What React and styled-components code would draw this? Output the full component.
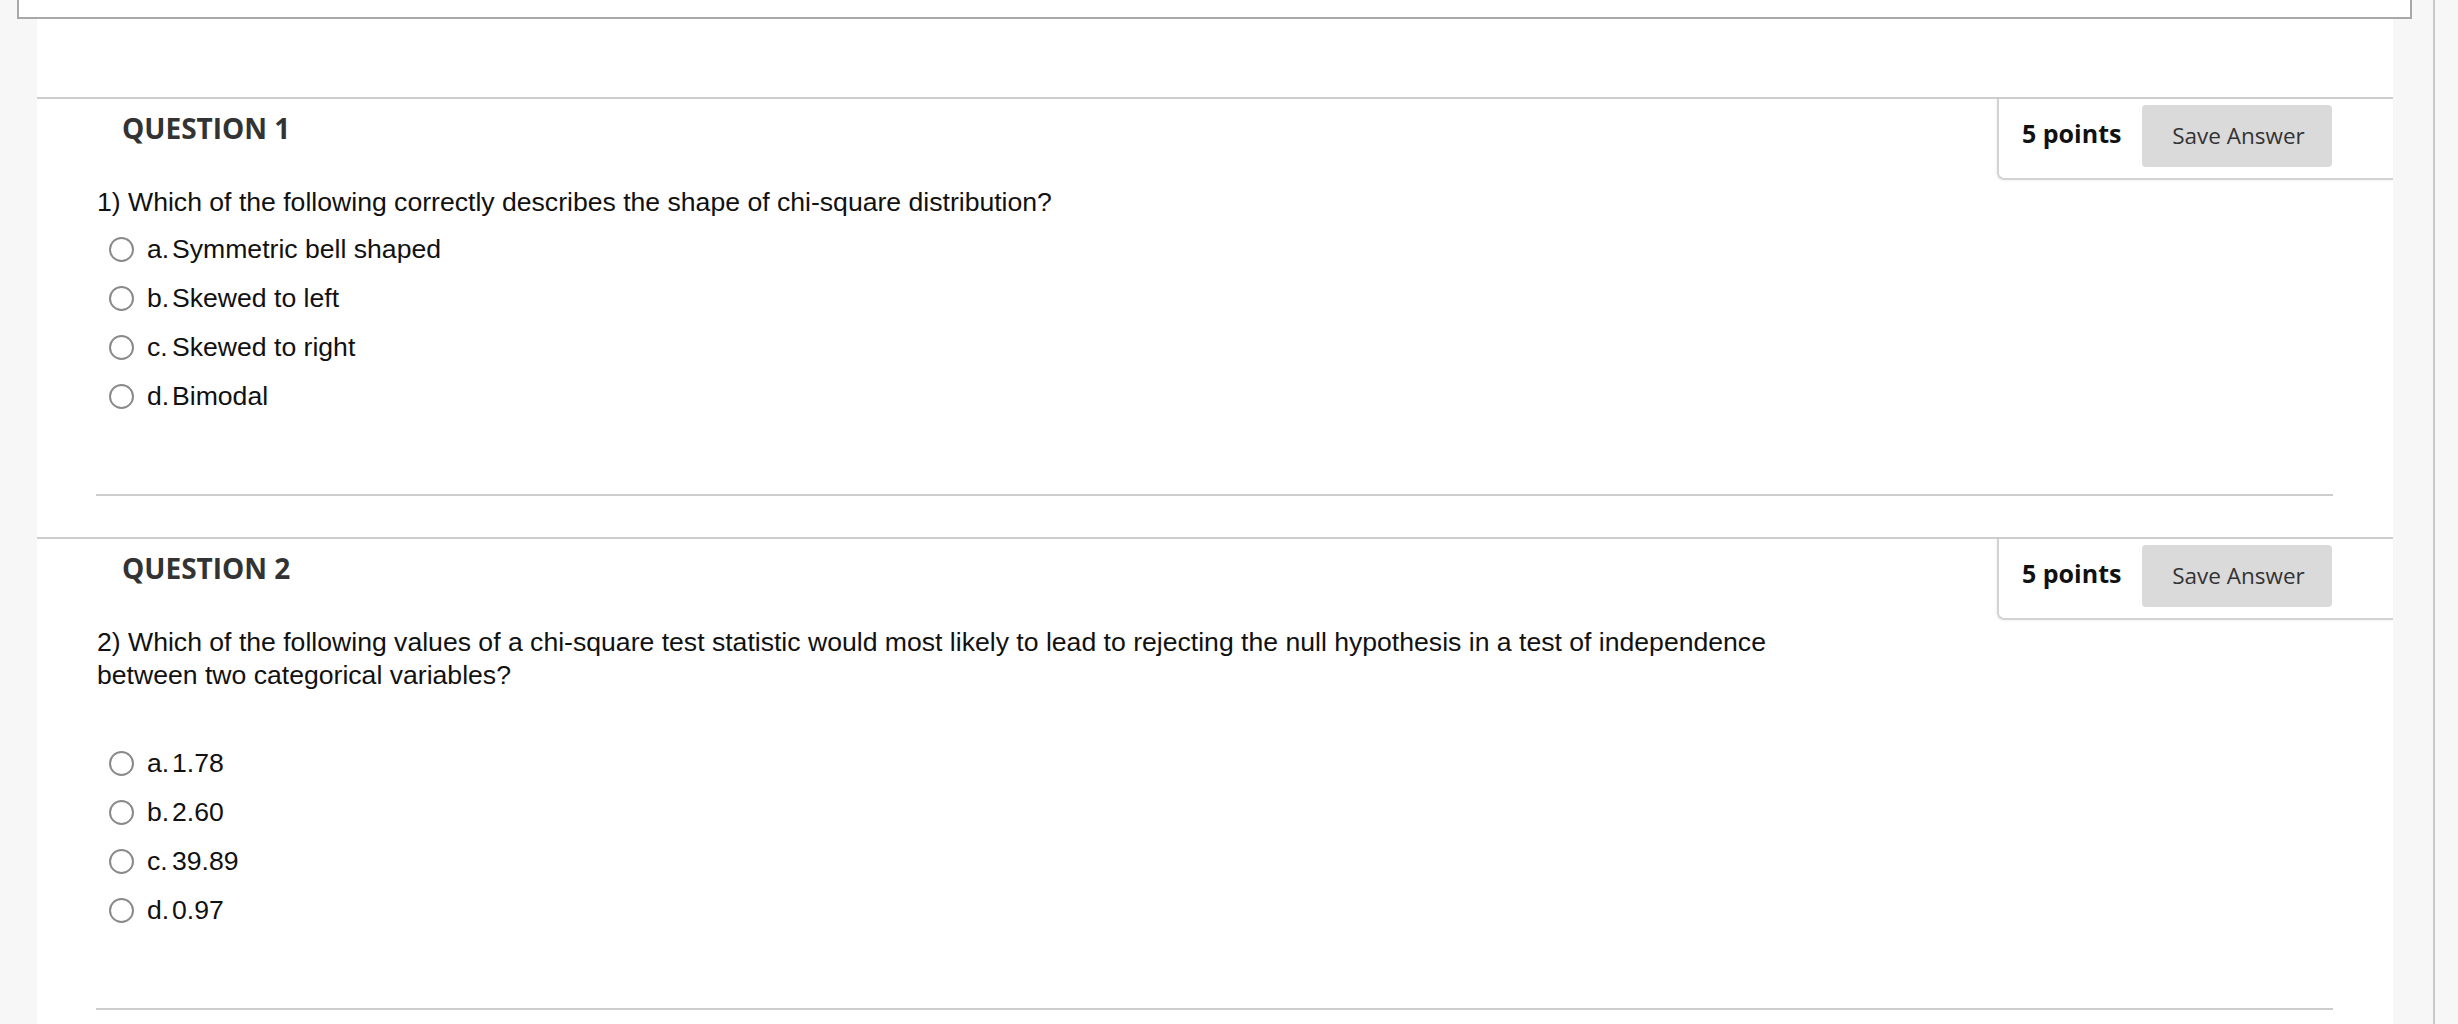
import React from "react";
import styled, { createGlobalStyle } from "styled-components";

const GlobalStyle = createGlobalStyle`
  html, body { margin: 0; padding: 0; background: #f7f7f7; }
  * { box-sizing: border-box; }
`;

const Page = styled.div`
  display: flex;
  min-height: 100vh;
  background: #f7f7f7;
`;

const Main = styled.div`
  width: 2433px;
  display: flex;
  flex-direction: column;
`;

const RightRail = styled.div`
  flex: 1;
  border-left: 2px solid #c8c8c8;
`;

const TopBox = styled.div`
  margin-left: 17px;
  width: 2395px;
  height: 19px;
  background: #fff;
  border: 2px solid #a8a8a8;
  border-top: none;
`;

const Panel = styled.div`
  margin-left: 37px;
  width: 2356px;
  background: #fff;
  padding-top: 78px;
  padding-bottom: 40px;
`;

const Question = styled.section`
  display: flex;
  flex-direction: column;
`;

const Header = styled.div`
  display: flex;
  justify-content: space-between;
  align-items: flex-start;
  border-top: 2px solid #cdcdcd;
`;

const Title = styled.h2`
  margin: 9px 0 0 85px;
  font-family: "Open Sans", sans-serif;
  font-weight: 700;
  font-size: 28px;
  line-height: 40px;
  color: #333;
`;

const PointsBox = styled.div`
  width: 396px;
  display: flex;
  align-items: center;
  gap: 21px;
  padding: 6px 60px 11px 23px;
  border-left: 2px solid #d3d3d3;
  border-bottom: 2px solid #d3d3d3;
  border-bottom-left-radius: 7px;
  box-shadow: -1px 1px 3px rgba(0, 0, 0, 0.05);
`;

const Points = styled.span`
  font-family: "Open Sans", sans-serif;
  font-weight: 700;
  font-size: 25px;
  color: #111;
  white-space: nowrap;
  margin-bottom: 6px;
`;

const SaveButton = styled.button`
  width: 190px;
  height: 62px;
  border: none;
  border-radius: 4px;
  background: #dadada;
  color: #333;
  font-family: "Open Sans", sans-serif;
  font-size: 22.5px;
  padding: 0 0 2px 2px;
  cursor: pointer;
`;

const Body = styled.div`
  margin: 6px 60px 0 60px;
  font-family: "Liberation Sans", Arial, sans-serif;
  color: #111;
`;

const QuestionText = styled.p`
  margin: 0;
  max-width: 1740px;
  font-size: 26.6px;
  line-height: 33px;
  padding-bottom: ${(p) => (p.$spaced ? "41px" : "0")};
`;

const Options = styled.ul`
  list-style: none;
  margin: 6px 0 0 0;
  padding: 0;
`;

const Option = styled.li`
  height: 49px;
  display: flex;
  align-items: center;
  padding-left: 12px;
  font-size: 26.6px;
`;

const Radio = styled.input.attrs({ type: "radio" })`
  appearance: none;
  -webkit-appearance: none;
  width: 25px;
  height: 25px;
  margin: 0 13px 0 0;
  border: 2px solid #8a8a8a;
  border-radius: 50%;
  background: #fff;
  flex-shrink: 0;
`;

const Letter = styled.span`
  width: 25px;
  flex-shrink: 0;
`;

const Separator = styled.hr`
  margin: 73px 60px 41px 59px;
  border: none;
  height: 2px;
  background: #cdcdcd;
`;

const questions = [
  {
    n: 1,
    text: "1) Which of the following correctly describes the shape of chi-square distribution?",
    spaced: false,
    options: ["Symmetric bell shaped", "Skewed to left", "Skewed to right", "Bimodal"],
  },
  {
    n: 2,
    text: "2) Which of the following values of a chi-square test statistic would most likely to lead to rejecting the null hypothesis in a test of independence between two categorical variables?",
    spaced: true,
    options: ["1.78", "2.60", "39.89", "0.97"],
  },
];

const letters = ["a.", "b.", "c.", "d."];

export default function App() {
  return (
    <>
      <GlobalStyle />
      <Page>
        <Main>
          <TopBox />
          <Panel>
            {questions.map((q) => (
              <Question key={q.n}>
                <Header>
                  <Title>QUESTION {q.n}</Title>
                  <PointsBox>
                    <Points>5 points</Points>
                    <SaveButton>Save Answer</SaveButton>
                  </PointsBox>
                </Header>
                <Body>
                  <QuestionText $spaced={q.spaced}>{q.text}</QuestionText>
                  <Options>
                    {q.options.map((o, i) => (
                      <Option key={i}>
                        <Radio name={`q${q.n}`} />
                        <Letter>{letters[i]}</Letter>
                        {o}
                      </Option>
                    ))}
                  </Options>
                </Body>
                <Separator />
              </Question>
            ))}
          </Panel>
        </Main>
        <RightRail />
      </Page>
    </>
  );
}
